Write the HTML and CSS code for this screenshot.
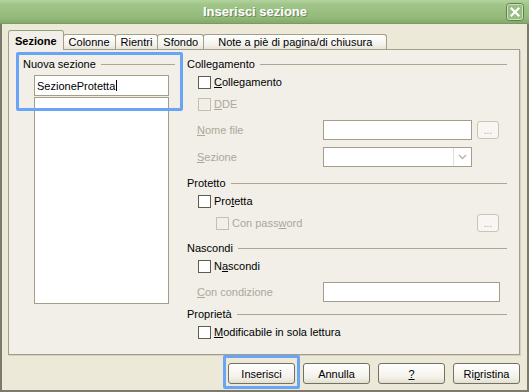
FILE: index.html
```html
<!DOCTYPE html>
<html>
<head>
    <meta charset="UTF-8">
    <title>Inserisci sezione</title>
    <link rel="stylesheet" href="styles.css">
</head>
<body>
    <div class="finestra">
        <div class="titolo">
            <span class="titolo-testo">Inserisci sezione</span>
            <span class="chiudi">
                <svg width="18" height="18" viewBox="0 0 18 18">
                    <rect x="0.5" y="0.5" width="17" height="17" rx="3" fill="#98bd80" stroke="#5f7f4c"/>
                    <rect x="1.5" y="1.5" width="15" height="15" rx="2" fill="none" stroke="#cfe0c0"/>
                    <path d="M5.5 5.5 L12.5 12.5 M12.5 5.5 L5.5 12.5" stroke="#fff" stroke-width="2.2" stroke-linecap="square"/>
                </svg>
            </span>
        </div>

        <div class="corpo">
            <div class="schede">
                <div class="scheda attiva">Sezione</div>
                <div class="scheda">Colonne</div>
                <div class="scheda">Rientri</div>
                <div class="scheda">Sfondo</div>
                <div class="scheda larga">Note a piè di pagina/di chiusura</div>
            </div>

            <div class="pannello">
                <div class="sinistra">
                    <div class="evidenzia">
                        <div class="gruppo-titolo">Nuova sezione</div>
                        <div class="nome">SezioneProtetta<span class="cursore"></span></div>
                    </div>
                    <div class="lista"></div>
                </div>

                <div class="destra">
                    <div class="gruppo">
                        <div class="gruppo-titolo">Collegamento</div>
                        <div class="riga"><span class="casella"></span><u>C</u>ollegamento</div>
                        <div class="riga disattivo"><span class="casella"></span><u>D</u>DE</div>
                        <div class="campo">
                            <span class="etichetta"><u>N</u>ome file</span>
                            <span class="testo"></span>
                            <span class="puntini">...</span>
                        </div>
                        <div class="campo">
                            <span class="etichetta"><u>S</u>ezione</span>
                            <span class="testo combo">
                                <span class="freccia">
                                    <svg width="9" height="6" viewBox="0 0 9 6"><path d="M1 1 L4.5 4.5 L8 1" fill="none" stroke="#b9b4a3" stroke-width="1.4"/></svg>
                                </span>
                            </span>
                        </div>
                    </div>

                    <div class="gruppo">
                        <div class="gruppo-titolo">Protetto</div>
                        <div class="riga"><span class="casella"></span>Pro<u>t</u>etta</div>
                        <div class="riga rientro disattivo">
                            <span class="casella"></span>Con pass<u>w</u>ord
                            <span class="puntini">...</span>
                        </div>
                    </div>

                    <div class="gruppo">
                        <div class="gruppo-titolo">Nascondi</div>
                        <div class="riga"><span class="casella"></span>N<u>a</u>scondi</div>
                        <div class="campo">
                            <span class="etichetta"><u>C</u>on condizione</span>
                            <span class="testo lungo"></span>
                        </div>
                    </div>

                    <div class="gruppo stretto">
                        <div class="gruppo-titolo">Proprietà</div>
                        <div class="riga"><span class="casella"></span><u>M</u>odificabile in sola lettura</div>
                    </div>
                </div>
            </div>

            <div class="pulsanti">
                <button class="pulsante evidenziato">Inserisci</button>
                <button class="pulsante">Annulla</button>
                <button class="pulsante"><u>?</u></button>
                <button class="pulsante">Ri<u>p</u>ristina</button>
            </div>
        </div>
    </div>
</body>
</html>
```

FILE: styles.css
```css
body {
    margin: 0;
    background: #ece9d8;
    font-family: "Liberation Sans", Arial, sans-serif;
    font-size: 11px;
    color: #000;
}

.finestra {
    width: 529px;
    height: 392px;
    box-sizing: border-box;
    border: 2px solid #7d7a6b;
    border-top: none;
    background: #ece9d8;
    display: flex;
    flex-direction: column;
}

/* barra del titolo */
.titolo {
    height: 24px;
    margin: 0 -2px;
    padding: 0 5px 0 4px;
    display: flex;
    align-items: center;
    background: linear-gradient(#b4d29e 0%, #a0c588 20%, #94ba7b 75%, #84aa6a 100%);
    border-bottom: 1px solid #7a9a62;
    box-sizing: border-box;
}

.titolo-testo {
    flex: 1;
    text-align: center;
    color: #fff;
    font-weight: bold;
    font-size: 13px;
    text-shadow: 1px 1px 0 #6c8c57;
}

.chiudi {
    display: flex;
}

.corpo {
    flex: 1;
    padding: 6px 7px 6px 6px;
    display: flex;
    flex-direction: column;
}

/* schede */
.schede {
    display: flex;
    align-items: flex-end;
    height: 20px;
}

.scheda {
    height: 15px;
    line-height: 15px;
    padding: 0 5px;
    margin-left: -1px;
    border: 1px solid #a39d89;
    border-bottom: none;
    border-radius: 3px 3px 0 0;
    background: linear-gradient(#fefefd, #f4f3ee 60%, #e4e1d4);
    white-space: nowrap;
}

.scheda.attiva {
    height: 18px;
    line-height: 18px;
    padding: 1px 6px 0;
    margin-left: 0;
    font-weight: bold;
    background: #f1efe8;
    border-top-color: #8ea477;
    position: relative;
    z-index: 1;
}

.scheda.larga {
    padding: 0 14px;
}

.pannello {
    margin-top: -1px;
    height: 306px;
    box-sizing: border-box;
    border: 1px solid #a39d89;
    background: #f1efe8;
    box-shadow: 1px 1px 0 #d4d0c0;
    display: grid;
    grid-template-columns: 172px 1fr;
}

.sinistra {
    padding: 7px 6px 0 14px;
}

.destra {
    padding: 7px 12px 0 6px;
}

.gruppo-titolo {
    display: flex;
    align-items: center;
    height: 14px;
    white-space: nowrap;
}

.gruppo-titolo::after {
    content: "";
    flex: 1;
    height: 1px;
    margin-left: 5px;
    background: #aca690;
}

.gruppo + .gruppo {
    margin-top: 9px;
}

.gruppo.stretto {
    margin-top: 5px;
}

/* evidenziazioni blu */
.evidenzia,
.evidenziato {
    position: relative;
}

.evidenzia::after,
.evidenziato::after {
    content: "";
    position: absolute;
    border: 3px solid #6aa5f5;
    border-radius: 2px;
}

.evidenzia::after {
    top: -5px;
    left: -7px;
    right: -8px;
    bottom: -15px;
}

.evidenziato::after {
    top: -9px;
    left: -6px;
    right: -6px;
    bottom: -6px;
}

.nome {
    margin: 4px 0 0 11px;
    width: 135px;
    height: 21px;
    box-sizing: border-box;
    border: 1px solid #a39d89;
    background: #fff;
    padding-left: 2px;
    display: flex;
    align-items: center;
}

.cursore {
    width: 1px;
    height: 11px;
    margin-left: 1px;
    background: #000;
}

.lista {
    margin: 1px 0 0 11px;
    width: 135px;
    height: 207px;
    box-sizing: border-box;
    border: 1px solid #a39d89;
    background: #fff;
}

/* caselle e campi */
.riga {
    display: flex;
    align-items: center;
    height: 14px;
    margin: 4px 0 0 11px;
}

.riga + .riga {
    margin-top: 8px;
}

.riga.rientro {
    height: 18px;
    margin: 6px 0 0 29px;
}

.casella {
    width: 13px;
    height: 13px;
    box-sizing: border-box;
    border: 1px solid #5e5c52;
    background: #fff;
    margin-right: 3px;
}

.disattivo {
    color: #aca899;
}

.disattivo .casella {
    border-color: #c4bfae;
    background: transparent;
}

.campo {
    display: flex;
    align-items: center;
    height: 20px;
    margin: 9px 0 0 10px;
}

.campo + .campo {
    margin-top: 7px;
}

.etichetta {
    width: 126px;
    color: #aca899;
}

.testo {
    width: 149px;
    height: 20px;
    box-sizing: border-box;
    border: 1px solid #a39d89;
    background: #fff;
}

.testo.lungo {
    width: 177px;
}

.combo {
    display: flex;
    justify-content: flex-end;
}

.freccia {
    width: 17px;
    border-left: 1px solid #e2dfd5;
    display: flex;
    align-items: center;
    justify-content: center;
}

.puntini {
    margin-left: auto;
    margin-right: 8px;
    width: 22px;
    height: 18px;
    box-sizing: border-box;
    border: 1px solid #c9c4b4;
    border-radius: 3px;
    background: #f7f6f2;
    color: #aca899;
    font-size: 10px;
    text-align: center;
    line-height: 18px;
}

/* pulsanti */
.pulsanti {
    display: flex;
    justify-content: flex-end;
    gap: 8px;
    margin-top: 8px;
}

.pulsante {
    width: 67px;
    height: 21px;
    padding: 0;
    box-sizing: border-box;
    border: 1px solid #75715f;
    border-radius: 3px;
    background: linear-gradient(#ffffff, #f3f1e9 70%, #e2dfd2);
    font: inherit;
    color: #000;
}
```
